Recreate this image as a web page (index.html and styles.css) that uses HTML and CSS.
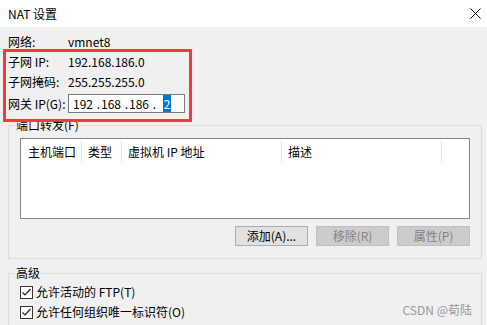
FILE: index.html
```html
<html>
<head>
    <meta charset="utf-8">
    <link rel="stylesheet" href="styles.css">
</head>
<body>
<div class="dialog">
    <div class="titlebar">
        <span class="title">NAT 设置</span>
        <svg class="close" width="11" height="11" viewBox="0 0 11 11">
            <path d="M0.5 0.5 L10.5 10.5 M10.5 0.5 L0.5 10.5" stroke="#000" stroke-width="1" fill="none"/>
        </svg>
    </div>
    <div class="content">
        <div class="info">
            <div class="row"><span class="label">网络:</span><span>vmnet8</span></div>
            <div class="row"><span class="label">子网 IP:</span><span>192.168.186.0</span></div>
            <div class="row row-short"><span class="label">子网掩码:</span><span>255.255.255.0</span></div>
            <div class="row row-gw">
                <span class="label">网关 IP(G):</span>
                <div class="ipbox">
                    <span class="seg">192</span><span class="dot">.</span>
                    <span class="seg">168</span><span class="dot">.</span>
                    <span class="seg">186</span><span class="dot">.</span>
                    <span class="seg"><span class="sel">2</span></span>
                </div>
            </div>
        </div>

        <fieldset class="group">
            <legend>端口转发(F)</legend>
            <div class="listview">
                <div class="lv-head">
                    <div class="col c1">主机端口</div>
                    <div class="col c2">类型</div>
                    <div class="col c3">虚拟机 IP 地址</div>
                    <div class="col c4">描述</div>
                </div>
            </div>
            <div class="buttons">
                <button class="btn">添加(A)...</button>
                <button class="btn" disabled>移除(R)</button>
                <button class="btn" disabled>属性(P)</button>
            </div>
        </fieldset>

        <fieldset class="group group-adv">
            <legend>高级</legend>
            <label class="check"><span class="box"><svg width="13" height="13" viewBox="0 0 13 13"><path d="M2.5 6.5 L5 9 L10.5 3" stroke="#222" stroke-width="1.2" fill="none"/></svg></span>允许活动的 FTP(T)</label>
            <label class="check"><span class="box"><svg width="13" height="13" viewBox="0 0 13 13"><path d="M2.5 6.5 L5 9 L10.5 3" stroke="#222" stroke-width="1.2" fill="none"/></svg></span>允许任何组织唯一标识符(O)</label>
        </fieldset>
    </div>

    <div class="highlight"></div>
    <div class="watermark">CSDN @荀陆</div>
</div>
</body>
</html>
```

FILE: styles.css
```css
html, body {margin:0; padding:0;}
body {width:487px; height:325px; overflow:hidden; background:#f0f0f0;
      font-family:"Noto Sans CJK SC", sans-serif; font-size:12px; color:#000;}

.dialog {position:relative; width:487px; height:325px; overflow:hidden;}

.titlebar {height:27px; background:#fff; display:flex; align-items:center; justify-content:space-between; padding:0 6px 0 8px; box-sizing:border-box;}
.title {font-size:12px;}
.close {display:block; margin-top:-1px;}

.content {padding:5px 5px 0 8px;}

.row {display:flex; height:20px; line-height:20px;}
.row-short {height:19px; line-height:19px;}
.label {width:60px; flex:none;}
.row-gw {height:19px; margin-top:3px; align-items:center;}

.ipbox {width:117px; height:19px; box-sizing:border-box; border:1px solid #7a7a7a; background:#fff;
        display:flex; align-items:center; padding-left:3px; line-height:15px;}
.seg {width:22px; text-align:center;}
.dot {width:6px; text-align:right;}
.sel {background:#0078d7; color:#fff; padding:0 1px;}

.group {margin:4px 0 0 0; padding:0; min-width:0; border:1px solid #dcdcdc;}
.group legend {margin-left:6px; padding:0 1px; line-height:16px;}

.listview {margin:5px 11px 0 11px; height:81px; box-sizing:border-box; border:1px solid #828790; background:#fff;}
.lv-head {display:flex; margin-top:1px; height:23px;}
.col {box-sizing:border-box; border-right:1px solid #e5e5e5; padding:2px 0 0 6px; line-height:20px;}
.c1 {width:61px; padding-left:7px;}
.c2 {width:40px;}
.c3 {width:160px;}
.c4 {width:160px;}

.buttons {display:flex; justify-content:flex-end; gap:8px; margin:7px 11px 12px 0;}
.btn {width:73px; height:20px; padding:0; margin:0; box-sizing:border-box; border:1px solid #adadad; background:#e1e1e1;
      font:inherit; color:#000; line-height:18px;}
.btn:disabled {background:#cccccc; border-color:#bfbfbf; color:#838383;}

.group-adv {margin-top:6px; height:80px; border-bottom:none;}
.check {display:flex; align-items:center; height:20px; line-height:20px; padding-left:11px; gap:3px;}
.check:first-of-type {margin-top:1px;}
.box {width:13px; height:13px; box-sizing:border-box; border:1px solid #333; background:#fff; display:flex;}
.box svg {margin:-1px;}

.highlight {position:absolute; left:3px; top:49px; width:189px; height:73px; box-sizing:border-box; border:3px solid #f5383b;}
.watermark {position:absolute; right:15px; top:301px; color:#999; font-size:12px; line-height:18px;}
```
